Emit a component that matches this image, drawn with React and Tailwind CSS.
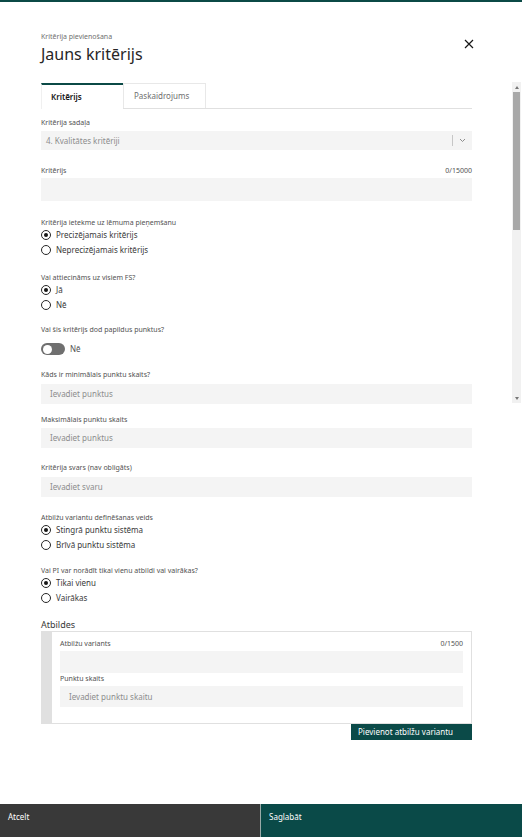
import React from "react";

const font = { fontFamily: "'Noto Sans', 'Open Sans', sans-serif" };

function Label({ children, right }) {
  return (
    <div className="flex items-center justify-between text-[7px] leading-[9px] text-[#525252]">
      <span>{children}</span>
      {right && <span>{right}</span>}
    </div>
  );
}

function Radio({ checked, children }) {
  return (
    <div className="flex h-[15px] items-center gap-[5px] text-[8px] text-[#393939]">
      <span className="flex h-[10px] w-[10px] items-center justify-center rounded-full border border-[#262626] bg-white">
        {checked && <span className="h-[4px] w-[4px] rounded-full bg-[#161616]" />}
      </span>
      <span>{children}</span>
    </div>
  );
}

function RadioGroup({ label, options, value, className }) {
  return (
    <div className={className}>
      <Label>{label}</Label>
      <div className="flex flex-col">
        {options.map((o) => (
          <Radio key={o} checked={o === value}>
            {o}
          </Radio>
        ))}
      </div>
    </div>
  );
}

function Field({ label, placeholder, right, h = "h-[20px]", gap = "mt-[5px]", className }) {
  return (
    <div className={className}>
      <Label right={right}>{label}</Label>
      <div className={`flex items-center bg-[#f4f4f4] px-[9px] text-[8px] text-[#8d8d8d] ${gap} ${h}`}>
        {placeholder}
      </div>
    </div>
  );
}

export default function App() {
  return (
    <div className="relative flex min-h-[837px] flex-col bg-white" style={font}>
      <div className="h-[2px] bg-[#0b4a46]" />

      <div className="flex items-start justify-between pl-[41px] pr-[48px] pt-[31px]">
        <div>
          <div className="text-[7px] leading-[8px] text-[#6f6f6f]">Kritērija pievienošana</div>
          <div className="mt-[3px] text-[16px] leading-[20px] text-[#262626]">Jauns kritērijs</div>
        </div>
        <svg className="mt-[6px]" width="10" height="10" viewBox="0 0 10 10" fill="none" stroke="#161616" strokeWidth="1.2">
          <path d="M1 1l8 8M9 1l-8 8" />
        </svg>
      </div>

      <div className="mt-[19px] pl-[41px] pr-[50px]">
        <div className="flex h-[26px] border-b border-[#e0e0e0]">
          <div className="-mb-px flex w-[82px] items-center border-t-2 border-l border-[#0b4a46] border-l-[#f0f0f0] bg-white pl-[9px] text-[8px] font-semibold text-[#161616]">
            Kritērijs
          </div>
          <div className="flex w-[83px] items-center border border-b-0 border-[#e8e8e8] pl-[10px] text-[8px] text-[#6f6f6f]">
            Paskaidrojums
          </div>
        </div>

        <div className="mt-[9px]">
          <Label>Kritērija sadaļa</Label>
          <div className="mt-[4px] flex h-[19px] items-center bg-[#f4f4f4] pl-[5px] text-[8px] text-[#8d8d8d]">
            <span className="flex-1">4. Kvalitātes kritēriji</span>
            <span className="h-[11px] w-px bg-[#c6c6c6]" />
            <svg className="mx-[6px]" width="7" height="5" viewBox="0 0 7 5" fill="none" stroke="#8d8d8d" strokeWidth="1">
              <path d="M1 1l2.5 2.5L6 1" />
            </svg>
          </div>
        </div>

        <Field className="mt-[16px]" label="Kritērijs" right="0/15000" h="h-[23px]" gap="mt-[3px]" />

        <RadioGroup
          className="mt-[17px]"
          label="Kritērija ietekme uz lēmuma pieņemšanu"
          options={["Precizējamais kritērijs", "Neprecizējamais kritērijs"]}
          value="Precizējamais kritērijs"
        />

        <RadioGroup
          className="mt-[16px]"
          label="Vai attiecināms uz visiem FS?"
          options={["Jā", "Nē"]}
          value="Jā"
        />

        <div className="mt-[13px]">
          <Label>Vai šis kritērijs dod papildus punktus?</Label>
          <div className="mt-[9px] flex items-center gap-[5px]">
            <span className="flex h-[12px] w-[24px] items-center rounded-full bg-[#6f6f6f] pl-[2px]">
              <span className="h-[9px] w-[9px] rounded-full bg-white" />
            </span>
            <span className="text-[8px] text-[#525252]">Nē</span>
          </div>
        </div>

        <Field className="mt-[15px]" label="Kāds ir minimālais punktu skaits?" placeholder="Ievadiet punktus" />
        <Field className="mt-[11px]" label="Maksimālais punktu skaits" placeholder="Ievadiet punktus" gap="mt-[4px]" />
        <Field className="mt-[15px]" label="Kritērija svars (nav obligāts)" placeholder="Ievadiet svaru" />

        <RadioGroup
          className="mt-[16px]"
          label="Atbilžu variantu definēšanas veids"
          options={["Stingrā punktu sistēma", "Brīvā punktu sistēma"]}
          value="Stingrā punktu sistēma"
        />

        <RadioGroup
          className="mt-[14px]"
          label="Vai PI var norādīt tikai vienu atbildi vai vairākas?"
          options={["Tikai vienu", "Vairākas"]}
          value="Tikai vienu"
        />

        <div className="mb-[1px] mt-[14px] text-[9px] leading-[11px] text-[#393939]">Atbildes</div>
        <div className="flex border border-[#e0e0e0]">
          <div className="w-[10px] bg-[#e0e0e0]" />
          <div className="flex-1 px-[8px] pb-[16px] pt-[7px]">
            <Field label="Atbilžu variants" right="0/1500" h="h-[22px]" gap="mt-[3px]" />
            <Field className="mt-[1px]" label="Punktu skaits" placeholder="Ievadiet punktu skaitu" h="h-[21px]" gap="mt-[3px]" />
          </div>
        </div>
        <div className="flex justify-end">
          <div className="flex h-[16px] w-[121px] items-center bg-[#0b4a48] pl-[7px] text-[8px] text-white">
            Pievienot atbilžu variantu
          </div>
        </div>
      </div>

      <div className="mt-auto flex h-[33px]">
        <div className="w-[260px] bg-[#393939] pl-[8px] pt-[7px] text-[8px] text-white">Atcelt</div>
        <div className="w-px bg-[#9aaaa8]" />
        <div className="flex-1 bg-[#0a4a48] pl-[8px] pt-[7px] text-[8px] text-white">Saglabāt</div>
      </div>

      <div className="absolute right-[1px] top-[82px] flex h-[321px] w-[9px] flex-col bg-[#f1f1f1]">
        <div className="flex h-[10px] items-center justify-center">
          <span className="h-0 w-0 border-x-[2px] border-b-[3px] border-x-transparent border-b-[#777]" />
        </div>
        <div className="mx-[1px] h-[138px] bg-[#a8a8a8]" />
        <div className="flex-1" />
        <div className="flex h-[10px] items-center justify-center">
          <span className="h-0 w-0 border-x-[2px] border-t-[3px] border-x-transparent border-t-[#777]" />
        </div>
      </div>
    </div>
  );
}
